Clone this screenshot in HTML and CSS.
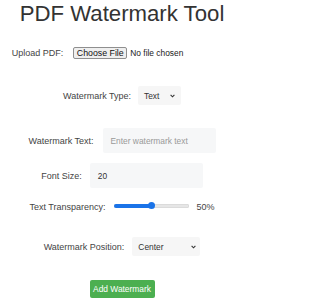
FILE: index.html
```html
<!DOCTYPE html>
<html lang="en">
<head>
<meta charset="utf-8">
<title>PDF Watermark Tool</title>
<link rel="stylesheet" href="styles.css">
</head>
<body>
<div class="app">
  <h1 class="title">PDF Watermark Tool</h1>

  <div class="row row-upload">
    <span class="label">Upload PDF:</span>
    <span class="file">
      <span class="file-btn">Choose File</span>
      <span class="file-text">No file chosen</span>
    </span>
  </div>

  <div class="row row-type">
    <span class="label">Watermark Type:</span>
    <span class="select select-type">
      <span class="select-text">Text</span>
      <svg class="chev" width="5" height="4" viewBox="0 0 5 4"><path d="M0.6 0.8 L2.5 2.8 L4.4 0.8" fill="none" stroke="#333" stroke-width="1.1"/></svg>
    </span>
  </div>

  <div class="row row-text">
    <span class="label">Watermark Text:</span>
    <span class="input"><span class="placeholder">Enter watermark text</span></span>
  </div>

  <div class="row row-size">
    <span class="label">Font Size:</span>
    <span class="input"><span class="value">20</span></span>
  </div>

  <div class="row row-trans">
    <span class="label">Text Transparency:</span>
    <span class="slider">
      <span class="track"></span>
      <span class="fill" style="width:50%"></span>
      <span class="thumb" style="left:50%"></span>
    </span>
    <span class="pct">50%</span>
  </div>

  <div class="row row-pos">
    <span class="label">Watermark Position:</span>
    <span class="select select-pos">
      <span class="select-text">Center</span>
      <svg class="chev" width="5" height="4" viewBox="0 0 5 4"><path d="M0.6 0.8 L2.5 2.8 L4.4 0.8" fill="none" stroke="#333" stroke-width="1.1"/></svg>
    </span>
  </div>

  <div class="row row-btn">
    <span class="btn">Add Watermark</span>
  </div>
</div>
</body>
</html>
```

FILE: styles.css
```css
html, body {
  margin: 0;
  padding: 0;
  background: #ffffff;
}
body {
  font-family: "Liberation Sans", Arial, sans-serif;
  color: #444;
}
.app {
  width: 239px;
  height: 300px;
  padding-left: 5px;
  box-sizing: border-box;
  display: flex;
  flex-direction: column;
  align-items: center;
  overflow: hidden;
}
.title {
  margin: 0;
  padding-top: 1px;
  font-size: 22.2px;
  line-height: 26px;
  font-weight: normal;
  color: #333;
  white-space: nowrap;
}
.row {
  display: flex;
  align-items: center;
  gap: 8px;
  white-space: nowrap;
}
.label {
  font-size: 9px;
  color: #444;
}
.row-upload { margin-top: 20px; height: 12px; gap: 10px; }
.file {
  display: flex;
  align-items: center;
  width: 159px;
  height: 12px;
  gap: 3px;
}
.file-btn {
  box-sizing: border-box;
  height: 12px;
  width: 54px;
  border: 1px solid #8f8f8f;
  border-radius: 2px;
  background: #efefef;
  font-size: 8.8px;
  color: #111;
  display: flex;
  align-items: center;
  justify-content: center;
}
.file-text {
  font-size: 8.4px;
  color: #222;
}
.row-type { margin-top: 27px; height: 19px; gap: 7px; }
.select {
  box-sizing: border-box;
  height: 19px;
  background: #f6f6f6;
  border-radius: 2px;
  display: flex;
  align-items: center;
  justify-content: space-between;
  padding: 0 6px;
  font-size: 8.4px;
  color: #333;
}
.select-type { width: 43px; }
.select-pos { width: 68px; padding-right: 4px; }
.chev { display: block; }
.row-text { margin-top: 23px; height: 25px; gap: 9px; }
.row-size { margin-top: 10px; height: 25px; }
.input {
  box-sizing: border-box;
  width: 113px;
  height: 25px;
  background: #f6f7f8;
  border-radius: 2px;
  display: flex;
  align-items: center;
  padding-left: 8px;
  font-size: 8.4px;
}
.placeholder { color: #999; }
.value { color: #333; }
.row-trans { margin-top: 12px; height: 14px; gap: 8px; }
.slider {
  position: relative;
  width: 75px;
  height: 14px;
  margin-top: -3px;
}
.track {
  position: absolute;
  left: 0;
  right: 0;
  top: 5px;
  height: 4px;
  border-radius: 2px;
  background: #e6e6e6;
  box-shadow: inset 0 0 0 0.5px #d0d0d0;
}
.fill {
  position: absolute;
  left: 0;
  top: 5px;
  height: 4px;
  border-radius: 2px;
  background: #1a73e8;
}
.thumb {
  position: absolute;
  top: 3.5px;
  width: 7px;
  height: 7px;
  margin-left: -3.5px;
  border-radius: 50%;
  background: #1a73e8;
}
.pct {
  font-size: 9px;
  color: #444;
}
.row-pos { margin-top: 23px; height: 19px; }
.row-btn { margin-top: 24px; height: 18px; }
.btn {
  box-sizing: border-box;
  width: 65px;
  height: 18px;
  background: #4caf50;
  color: #fff;
  border-radius: 2px;
  font-size: 8.4px;
  display: flex;
  align-items: center;
  justify-content: center;
}
```
